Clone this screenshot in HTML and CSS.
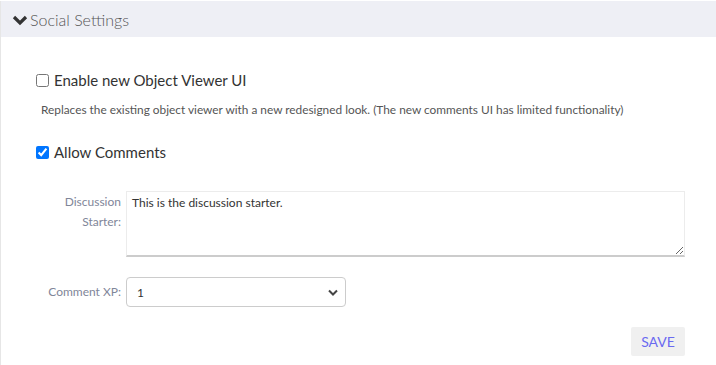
FILE: index.html
```html
<!DOCTYPE html>
<html lang="en">
<head>
    <meta charset="UTF-8">
    <title>Social Settings</title>
    <link rel="stylesheet" href="styles.css">
</head>
<body>
    <div class="panel">
        <div class="panel-heading">
            <svg class="chevron" width="16" height="12" viewBox="0 0 16 12">
                <path d="M2 3 L8 9 L14 3" fill="none" stroke="#333" stroke-width="3.2" stroke-linejoin="miter"/>
            </svg>
            <span>Social Settings</span>
        </div>

        <div class="panel-body">
            <label class="check-row first">
                <input type="checkbox">
                <span>Enable new Object Viewer UI</span>
            </label>
            <p class="help">Replaces the existing object viewer with a new redesigned look. (The new comments UI has limited functionality)</p>

            <label class="check-row">
                <input type="checkbox" checked>
                <span>Allow Comments</span>
            </label>

            <div class="form-row">
                <label class="form-label">Discussion Starter:</label>
                <textarea class="text-area">This is the discussion starter.</textarea>
            </div>

            <div class="form-row select-row">
                <label class="form-label">Comment XP:</label>
                <div class="select-box">
                    <span>1</span>
                    <svg width="10" height="7" viewBox="0 0 10 7">
                        <path d="M1 1.5 L5 5.5 L9 1.5" fill="none" stroke="#444" stroke-width="2"/>
                    </svg>
                </div>
            </div>

            <div class="actions">
                <button class="save-button">SAVE</button>
            </div>
        </div>
    </div>
</body>
</html>
```

FILE: styles.css
```css
* {
    margin: 0;
    padding: 0;
    box-sizing: border-box;
}

body {
    font-family: 'Lato', 'Liberation Sans', sans-serif;
    background: #ffffff;
    color: #333;
    padding-top: 1px;
}

.panel {
    border-left: 1px solid #e6e6e6;
    min-height: 364px;
}

.panel-heading {
    background: #eeeff5;
    height: 36px;
    display: flex;
    align-items: center;
    gap: 2px;
    padding-left: 11px;
    font-size: 16px;
    font-weight: 300;
    color: #555;
}

.chevron {
    margin-top: 1px;
}

.panel-body {
    padding: 0 31px 0 35px;
}

.check-row {
    display: flex;
    align-items: center;
    gap: 5px;
    font-size: 15px;
    color: #333;
}

.check-row input {
    margin: 0;
    width: 13px;
    height: 13px;
}

.check-row.first {
    margin-top: 34px;
}

.help {
    font-size: 11.85px;
    color: #555;
    margin: 13px 0 0 5px;
}

.check-row:not(.first) {
    margin-top: 26px;
}

.form-row {
    display: flex;
    gap: 5px;
    margin-top: 30px;
}

.form-label {
    width: 85px;
    text-align: right;
    font-size: 12px;
    line-height: 20px;
    color: #7f8699;
    padding-top: 1px;
}

.text-area {
    width: 559px;
    height: 66px;
    border: 1px solid #ececec;
    border-bottom: 2px solid #cccccc;
    padding: 3px 5px;
    font-family: 'Lato', 'Liberation Sans', sans-serif;
    font-size: 12px;
    line-height: 16px;
    color: #333;
    resize: vertical;
}

.select-row {
    margin-top: 20px;
    align-items: center;
}

.select-row .form-label {
    padding-top: 0;
}

.select-box {
    width: 220px;
    height: 30px;
    border: 1px solid #cccccc;
    border-radius: 4px;
    display: flex;
    align-items: center;
    justify-content: space-between;
    padding: 0 7px 0 10px;
    font-size: 12px;
    color: #333;
}

.actions {
    display: flex;
    justify-content: flex-end;
    margin-top: 20px;
}

.save-button {
    background: #f0f0f0;
    border: none;
    border-radius: 2px;
    width: 54px;
    height: 29px;
    font-family: 'Lato', 'Liberation Sans', sans-serif;
    font-size: 14px;
    color: #6a6af0;
    cursor: pointer;
}
```
